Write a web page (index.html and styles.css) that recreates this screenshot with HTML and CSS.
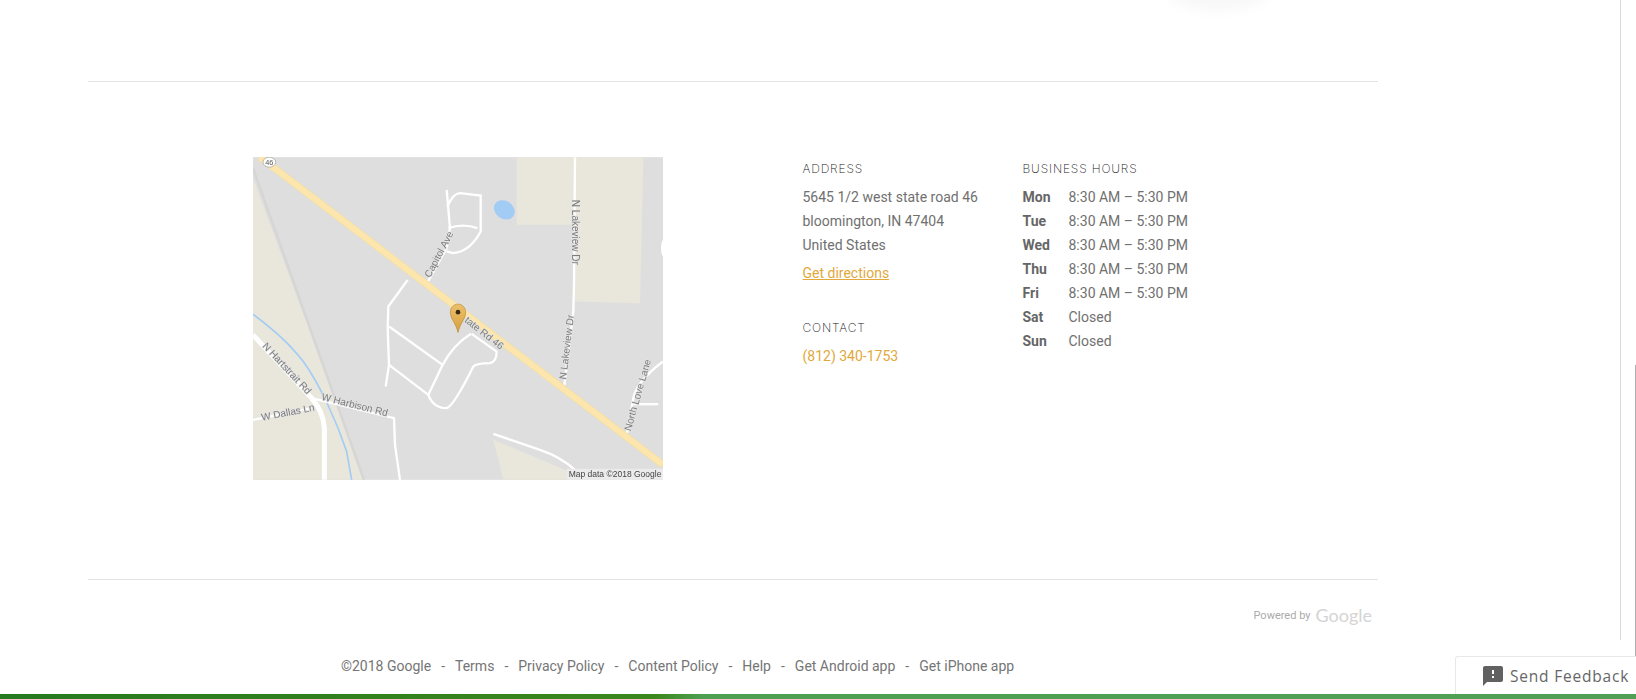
FILE: index.html
```html
<!DOCTYPE html>
<html lang="en">
<head>
<meta charset="utf-8">
<title>Business location</title>
<link rel="stylesheet" href="styles.css">
</head>
<body>
<div class="smudge"></div>
<main class="page">
  <hr class="rule rule-top">
  <section class="info">
    <svg class="map" viewBox="39 37 1230 968" width="410" height="323" role="img" aria-label="Map">
      <defs>
        <linearGradient id="pin" x1="0" y1="0" x2="0" y2="1">
          <stop offset="0" stop-color="#ebc06c"/>
          <stop offset="1" stop-color="#d99f3d"/>
        </linearGradient>
      </defs>
      <rect x="39" y="37" width="1230" height="968" fill="#dedede"/>
      <path d="M830 37H1210L1200 475L1005 470L1000 240H830Z" fill="#e9e7dc"/>
      <path d="M39 100L375 1005H39Z" fill="#e9e7dc"/>
      <path d="M760 885L1000 985L985 1005H790Z" fill="#e9e7dc"/>
      <path d="M39 70L372 1005" stroke="#d6d6d6" stroke-width="8" fill="none"/>
      <ellipse cx="793" cy="195" rx="33" ry="27" transform="rotate(35 793 195)" fill="#a3ccf5"/>
      <path d="M39 508C120 570 150 600 190 650C240 720 290 830 320 920L335 1005" stroke="#a3ccf5" stroke-width="5" fill="none"/>
      <g class="roads">
        <path d="M1005 37L1002 420L1000 500L972 730"/>
        <path d="M558 420L620 310L630 250L620 135"/>
        <path d="M622 185Q640 145 660 145L722 152L722 260Q690 320 640 325L620 320"/>
        <path d="M625 250Q670 235 712 250"/>
        <path d="M503 405L445 485L443 550L447 660L437 725"/>
        <path d="M447 545L608 660"/>
        <path d="M447 660L565 750"/>
        <path d="M565 750L608 660Q640 600 693 567"/>
        <path d="M565 750Q580 790 620 790Q640 785 700 665Q710 655 750 655Q770 650 770 620L695 567"/>
        <path d="M215 760L462 820L465 900L480 1005"/>
        <path d="M39 825L215 790"/>
        <path d="M760 867L900 915Q960 935 1005 975"/>
        <path d="M1160 870L1180 760Q1190 710 1269 650"/>
        <path d="M1180 778H1255"/>
      </g>
      <path d="M39 570L215 760Q250 800 253 850V1005" stroke="#fff" stroke-width="15" fill="none"/>
      <ellipse cx="1272" cy="310" rx="9" ry="26" fill="#fff"/>
      <path d="M60 37L1269 960" stroke="#f3dfa6" stroke-width="22" fill="none"/>
      <path d="M60 37L1269 960" stroke="#fce6ad" stroke-width="17" fill="none"/>
      <g class="labels">
        <text transform="translate(570 400) rotate(-62)">Capitol Ave</text>
        <text transform="translate(996 165) rotate(90)">N Lakeview Dr</text>
        <text transform="translate(978 705) rotate(-83)">N Lakeview Dr</text>
        <text transform="translate(1172 860) rotate(-74)">North Love Lane</text>
        <text transform="translate(66 605) rotate(47)">N Hartstrait Rd</text>
        <text transform="translate(243 765) rotate(14)">W Harbison Rd</text>
        <text transform="translate(66 828) rotate(-11)">W Dallas Ln</text>
        <text transform="translate(672 530) rotate(38)" class="route">tate Rd 46</text>
      </g>
      <ellipse cx="88" cy="52" rx="19" ry="15" fill="#fff" stroke="#999" stroke-width="2"/>
      <text x="88" y="60" class="shield">46</text>
      <path d="M654 478C667 478 677 488 677 503C677 522 660 535 654 563C648 535 631 522 631 503C631 488 641 478 654 478Z" fill="url(#pin)" stroke="#b98a38" stroke-width="2"/>
      <circle cx="654" cy="502" r="7" fill="#3b2a12"/>
      <rect x="980" y="972" width="289" height="33" fill="#ebebeb"/>
      <text x="986" y="996" class="attribution">Map data ©2018 Google</text>
    </svg>
    <div class="col col-address">
      <h2 class="heading">Address</h2>
      <p class="line">5645 1/2 west state road 46</p>
      <p class="line">bloomington, IN 47404</p>
      <p class="line">United States</p>
      <a class="link directions" href="#">Get directions</a>
      <h2 class="heading heading-contact">Contact</h2>
      <a class="phone" href="#">(812) 340-1753</a>
    </div>
    <div class="col">
      <h2 class="heading">Business Hours</h2>
      <dl class="hours">
        <dt>Mon</dt><dd>8:30 AM – 5:30 PM</dd>
        <dt>Tue</dt><dd>8:30 AM – 5:30 PM</dd>
        <dt>Wed</dt><dd>8:30 AM – 5:30 PM</dd>
        <dt>Thu</dt><dd>8:30 AM – 5:30 PM</dd>
        <dt>Fri</dt><dd>8:30 AM – 5:30 PM</dd>
        <dt>Sat</dt><dd>Closed</dd>
        <dt>Sun</dt><dd>Closed</dd>
      </dl>
    </div>
  </section>
  <hr class="rule">
  <div class="powered"><span class="powered-by">Powered by</span><span class="powered-logo">Google</span></div>
  <footer class="links">
    <span>©2018 Google</span><span>-</span>
    <a href="#">Terms</a><span>-</span>
    <a href="#">Privacy Policy</a><span>-</span>
    <a href="#">Content Policy</a><span>-</span>
    <a href="#">Help</a><span>-</span>
    <a href="#">Get Android app</a><span>-</span>
    <a href="#">Get iPhone app</a>
  </footer>
</main>
<div class="track-line"></div>
<div class="scroll-thumb"></div>
<button class="feedback" type="button">
  <svg viewBox="0 0 24 24" width="24" height="24" aria-hidden="true"><path d="M20 2H4c-1.1 0-1.99.9-1.99 2L2 22l4-4h14c1.1 0 2-.9 2-2V4c0-1.1-.9-2-2-2zm-7 12h-2v-2h2v2zm0-4h-2V6h2v4z"/></svg>
  <span>Send Feedback</span>
</button>
<div class="bottom-bar"></div>
</body>
</html>
```

FILE: styles.css
```css
* { box-sizing: border-box; }
html, body { margin: 0; height: 699px; overflow: hidden; background: #fff; }
body { font-family: Roboto, "Liberation Sans", sans-serif; font-size: 14px; color: #707070; }

.page { width: 1290px; margin-left: 88px; padding-top: 81px; }
.rule { height: 1px; margin: 0; border: 0; background: #e3e3e3; }

.info { display: flex; align-items: flex-start; height: 497px; padding: 75px 0 0 165px; }
.map { display: block; flex: none; margin-right: 139.5px; filter: blur(0.35px); }
.roads path { fill: none; stroke: #fff; stroke-width: 7; }
.labels text {
  font: 30px "Liberation Sans", sans-serif;
  fill: #7c7c7c;
  stroke: #e4e4e4;
  stroke-width: 4px;
  paint-order: stroke;
}
.shield { font: 22px "Liberation Sans", sans-serif; fill: #555; text-anchor: middle; }
.attribution { font: 25.5px "Liberation Sans", sans-serif; fill: #444; }

.col { flex: none; }
.col-address { width: 220px; }
.heading {
  margin: 0 0 4px;
  font-family: "Inter", "DejaVu Sans", sans-serif;
  font-size: 12px;
  font-weight: 200;
  line-height: 24px;
  letter-spacing: 0.85px;
  text-transform: uppercase;
  color: #222;
}
.heading-contact { margin-top: 31px; }
.line { margin: 0; line-height: 24px; }
.directions { display: block; width: max-content; margin-top: 4px; line-height: 24px; color: #e2a83c; text-decoration: underline; }
.phone { display: block; line-height: 24px; color: #e2a83c; text-decoration: none; }

.hours { display: grid; grid-template-columns: 46px auto; margin: 0; line-height: 24px; }
.hours dt { font-weight: 700; color: #666; }
.hours dd { margin: 0; }

.powered { display: flex; justify-content: flex-end; align-items: center; gap: 5px; height: 24px; margin-top: 23px; padding-right: 6px; }
.powered-by { font-size: 11px; color: #aaa; }
.powered-logo { font-family: Lato, sans-serif; font-size: 18px; color: #d4d4d4; line-height: 24px; }

.links { display: flex; gap: 10px; margin-top: 27px; padding-left: 253px; line-height: 24px; color: #757575; }
.links a { color: inherit; text-decoration: none; }

.smudge {
  position: absolute;
  left: 1175px;
  top: -24px;
  width: 85px;
  height: 24px;
  border-radius: 50%;
  box-shadow: 0 2px 14px 9px rgba(0, 0, 0, 0.03);
}
.track-line { position: fixed; left: 1620px; top: 0; width: 1px; height: 640px; background: #d9d9d9; }
.scroll-thumb { position: fixed; left: 1635px; top: 365px; width: 1px; height: 329px; background: #b0b0b0; }

.feedback {
  position: fixed;
  left: 1455px;
  right: 0;
  bottom: 5px;
  display: flex;
  align-items: center;
  gap: 5px;
  height: 38px;
  padding: 0 0 0 25px;
  border: 1px solid #e8e8e8;
  border-width: 1px 0 0 1px;
  border-radius: 3px 0 0 0;
  background: #fff;
  font-family: "Open Sans", sans-serif;
  font-size: 15.5px;
  letter-spacing: 0.8px;
  color: #666;
}
.feedback svg { flex: none; fill: #616161; }
.feedback span { white-space: nowrap; }

.bottom-bar {
  position: fixed;
  left: 0;
  right: 0;
  bottom: 0;
  height: 5px;
  background: linear-gradient(90deg, #267a1f 0%, #3a871c 40%, #4e9f52 43%, #509f55 100%);
}
```
